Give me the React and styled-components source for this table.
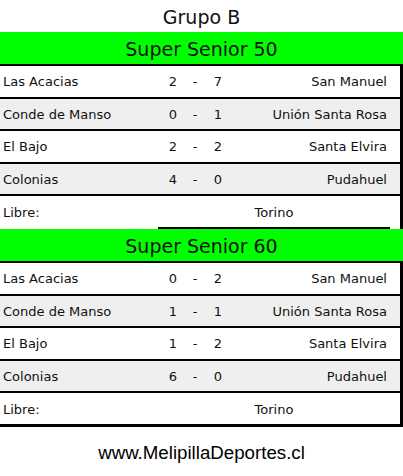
import styled, { createGlobalStyle } from 'styled-components'

const groups = [
  {
    title: 'Super Senior 50',
    matches: [
      ['Las Acacias', 2, 7, 'San Manuel'],
      ['Conde de Manso', 0, 1, 'Unión Santa Rosa'],
      ['El Bajo', 2, 2, 'Santa Elvira'],
      ['Colonias', 4, 0, 'Pudahuel'],
    ],
    free: 'Torino',
  },
  {
    title: 'Super Senior 60',
    matches: [
      ['Las Acacias', 0, 2, 'San Manuel'],
      ['Conde de Manso', 1, 1, 'Unión Santa Rosa'],
      ['El Bajo', 1, 2, 'Santa Elvira'],
      ['Colonias', 6, 0, 'Pudahuel'],
    ],
    free: 'Torino',
  },
]

export default function App() {
  return (
    <Page>
      <GlobalStyle />
      <Title>Grupo B</Title>

      {groups.map((g, gi) => {
        const last = gi === groups.length - 1
        return (
          <Section key={g.title}>
            <GroupHeader>{g.title}</GroupHeader>
            <Body>
              {g.matches.map(([home, hs, as, away], i) => (
                <MatchRow key={home} $shade={i % 2 === 1}>
                  <Team>{home}</Team>
                  <Score>{hs}</Score>
                  <Score>-</Score>
                  <Score>{as}</Score>
                  <Team $right>{away}</Team>
                </MatchRow>
              ))}
              <FreeRow $last={last}>
                <Team>Libre:</Team>
                <FreeTeam $underline={!last}>{g.free}</FreeTeam>
              </FreeRow>
            </Body>
          </Section>
        )
      })}

      <Footer>www.MelipillaDeportes.cl</Footer>
    </Page>
  )
}

const GlobalStyle = createGlobalStyle`
  body {
    margin: 0;
    background: #fff;
  }
`

const Page = styled.div`
  width: 403px;
  font-family: 'DejaVu Sans', Verdana, sans-serif;
  color: #111;
`

const Title = styled.div`
  padding-top: 2px;
  height: 30px;
  line-height: 30px;
  font-size: 19px;
  text-align: center;
`

const Section = styled.div`
  display: flex;
  flex-direction: column;
`

const GroupHeader = styled.div`
  background: #00ff00;
  padding-top: 3px;
  height: 29px;
  line-height: 29px;
  font-size: 19px;
  text-align: center;
  border-bottom: 2px solid #000;
`

const Body = styled.div`
  width: 400px;
  border-right: 3px solid #000;
`

const MatchRow = styled.div`
  display: grid;
  grid-template-columns: 158px 30px 14px 32px 1fr 10px;
  align-items: center;
  height: 29.6px;
  padding-top: 1px;
  box-sizing: content-box;
  font-size: 13px;
  background: ${({ $shade }) => ($shade ? '#efefef' : '#fff')};
  border-bottom: 2px solid #000;
`

const FreeRow = styled(MatchRow)`
  background: #fff;
  border-bottom: ${({ $last }) => ($last ? '3px solid #000' : '2px solid #fff')};
  align-items: stretch;
`

const Team = styled.div`
  white-space: nowrap;
  padding: ${({ $right }) => ($right ? '0 3px 0 0' : '0 0 0 3px')};
  display: flex;
  align-items: center;
  justify-content: ${({ $right }) => ($right ? 'flex-end' : 'flex-start')};
`

const Score = styled.div`
  text-align: center;
`

const FreeTeam = styled.div`
  grid-column: 2 / 6;
  display: flex;
  align-items: center;
  justify-content: center;
  margin-bottom: ${({ $underline }) => ($underline ? '-2px' : '0')};
  border-bottom: ${({ $underline }) => ($underline ? '2px solid #000' : 'none')};
`

const Footer = styled.div`
  padding-top: 15px;
  line-height: 21px;
  font-family: 'Liberation Sans', Arial, sans-serif;
  font-size: 18.7px;
  text-align: center;
  color: #000;
`
